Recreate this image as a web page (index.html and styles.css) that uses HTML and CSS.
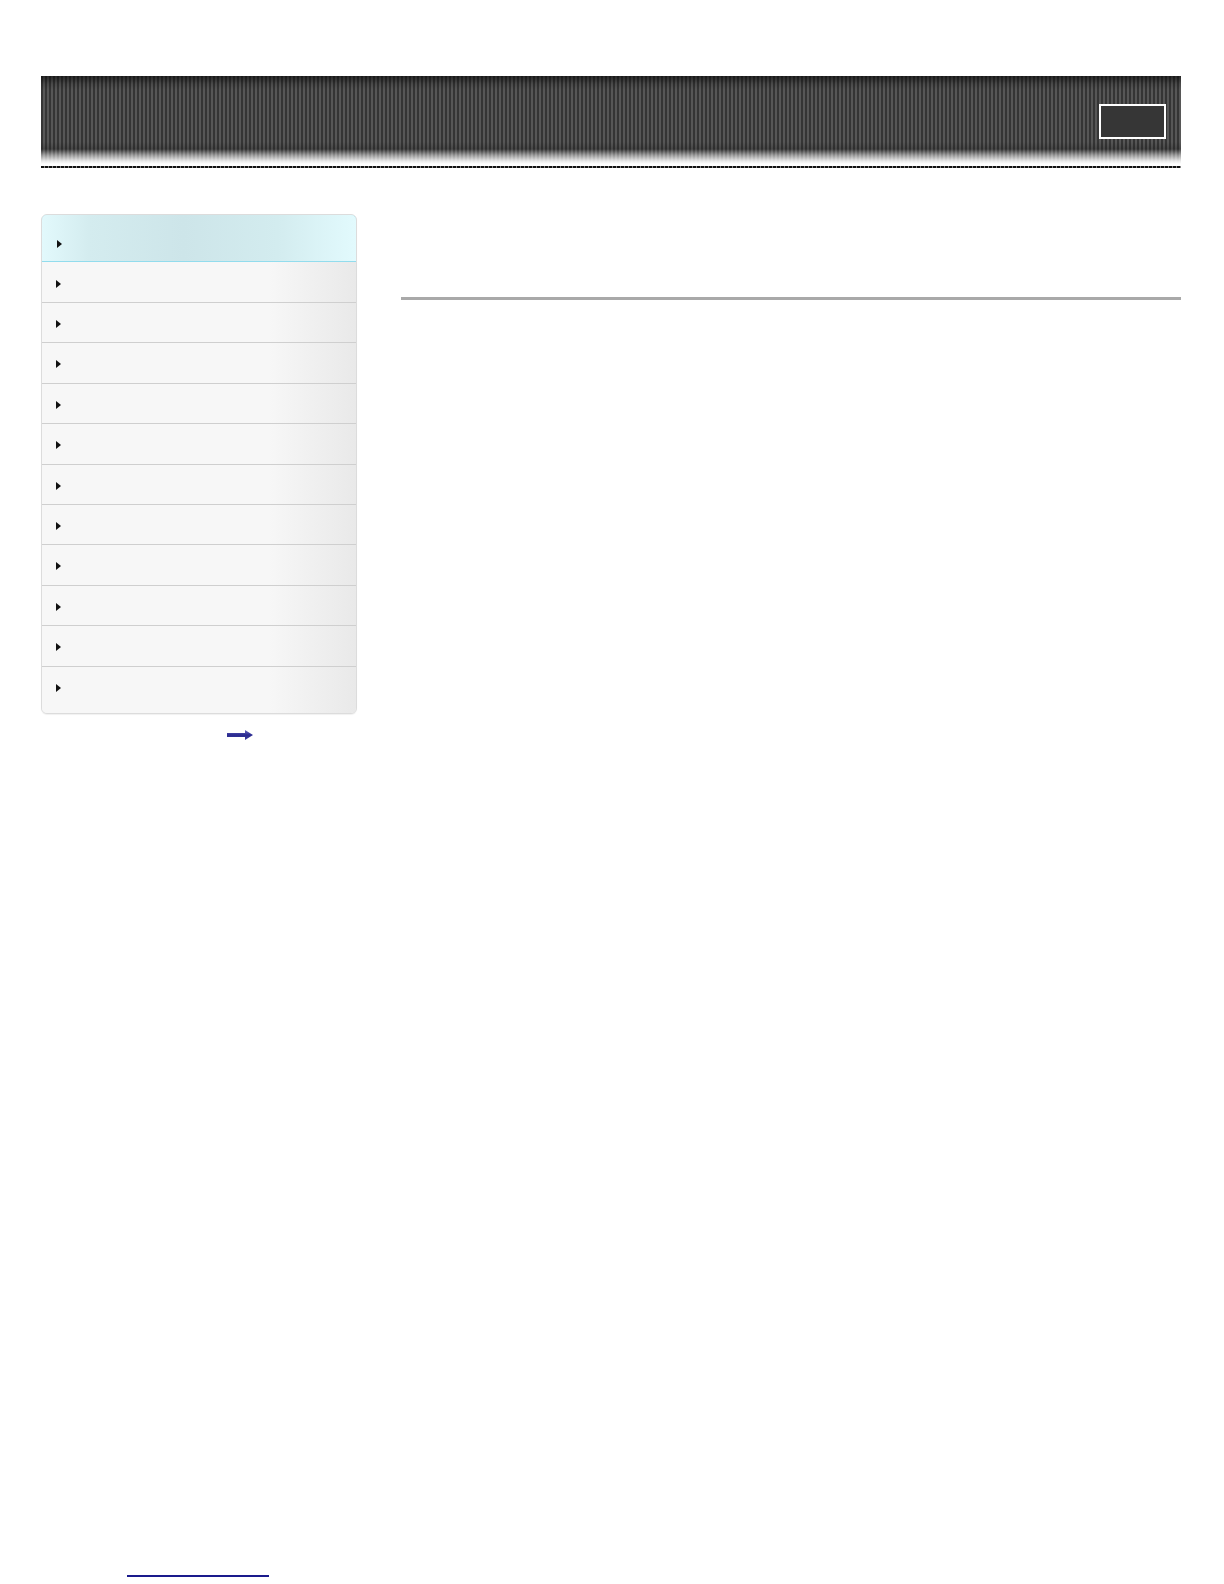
FILE: index.html
```html
<!DOCTYPE html>
<html>
<head>
<meta charset="utf-8">
<link rel="stylesheet" href="styles.css">
</head>
<body>
<div class="page">
  <header class="banner">
    <div class="banner-box"></div>
  </header>
  <div class="dots"></div>
  <div class="layout">
    <aside class="side">
      <nav class="menu">
        <div class="item active"><span class="tri"></span></div>
        <div class="item second"><span class="tri"></span></div>
        <div class="item"><span class="tri"></span></div>
        <div class="item"><span class="tri"></span></div>
        <div class="item"><span class="tri"></span></div>
        <div class="item"><span class="tri"></span></div>
        <div class="item"><span class="tri"></span></div>
        <div class="item"><span class="tri"></span></div>
        <div class="item"><span class="tri"></span></div>
        <div class="item"><span class="tri"></span></div>
        <div class="item"><span class="tri"></span></div>
        <div class="item last"><span class="tri"></span></div>
      </nav>
      <div class="more">
        <svg class="arrow" width="26" height="10" viewBox="0 0 26 10">
          <defs>
            <linearGradient id="ag" x1="0" y1="0" x2="0" y2="1">
              <stop offset="0" stop-color="#6a6ac0"/>
              <stop offset="0.5" stop-color="#2a2a90"/>
              <stop offset="1" stop-color="#3c3c9c"/>
            </linearGradient>
          </defs>
          <path d="M0 3 H18 V0 L26 5 L18 10 V7 H0 Z" fill="url(#ag)"/>
        </svg>
      </div>
    </aside>
    <main class="main">
      <div class="rule"></div>
    </main>
  </div>
  <div class="footer"><span class="foot-link"></span></div>
</div>
</body>
</html>
```
FILE: styles.css
```css
html, body {
  margin: 0;
  padding: 0;
  background: #fff;
  font-family: "Liberation Sans", Arial, sans-serif;
}
.page {
  width: 1140px;
  margin-left: 41px;
  padding-top: 76px;
}
.banner {
  height: 88px;
  position: relative;
  background:
    linear-gradient(to bottom,
      rgba(0,0,0,0.55) 0px,
      rgba(0,0,0,0.15) 8px,
      rgba(0,0,0,0) 14px,
      rgba(0,0,0,0) 66px,
      rgba(20,20,20,0.25) 73px,
      rgba(255,255,255,0.45) 79px,
      rgba(255,255,255,0.88) 85px,
      #fff 88px),
    repeating-linear-gradient(90deg,
      #353535 0px, #353535 2px,
      #575757 2px, #575757 4px);
}
.banner-box {
  position: absolute;
  left: 1058px;
  top: 28px;
  width: 63px;
  height: 31px;
  border: 2px solid #fff;
  background: #363636;
}
.dots {
  margin-top: 2px;
  height: 2px;
  background: repeating-linear-gradient(90deg, #111 0px, #111 3px, #888 3px, #888 4px);
}
.layout {
  display: flex;
  gap: 44px;
  margin-top: 46px;
}
.side {
  width: 316px;
  flex: none;
}
.menu {
  border: 1px solid #dcdcdc;
  border-radius: 6px;
  overflow: hidden;
  background: #f6f6f6;
  box-shadow: 0 1px 1px rgba(0,0,0,0.06);
}
.item {
  box-sizing: border-box;
  height: 40.4px;
  border-top: 1px solid #cfcfcf;
  display: flex;
  align-items: flex-start;
  padding-left: 14px;
  padding-top: 17px;
  background: linear-gradient(90deg, #f7f7f7 0%, #f7f7f7 72%, #e9e9e9 100%);
}
.item.active {
  height: 48px;
  margin: -1px -1px 0 -1px;
  padding-left: 15px;
  padding-top: 25px;
  border: 1px solid #9fe2f0;
  border-bottom-color: #92dced;
  border-radius: 6px 6px 0 0;
  background: linear-gradient(90deg, #e2f9fc 0%, #d4ecef 15%, #cde5e9 45%, #d3ecef 75%, #e2fafd 100%);
}
.item.second {
  border-top: none;
  height: 40px;
  padding-top: 18px;
}
.item.last {
  height: 47.4px;
}
.tri {
  width: 0;
  height: 0;
  border-top: 4px solid transparent;
  border-bottom: 4px solid transparent;
  border-left: 5px solid #111;
}
.more {
  height: 42px;
  display: flex;
  align-items: center;
  padding-left: 186px;
}
.arrow {
  display: block;
}
.main {
  flex: 1;
  padding-top: 83px;
}
.rule {
  height: 3px;
  background: #a9a9a9;
}
.footer {
  margin-top: 819px;
  padding-left: 86px;
  padding-bottom: 4px;
}
.foot-link {
  display: block;
  width: 142px;
  height: 2px;
  background: #1a1a8c;
}
```
